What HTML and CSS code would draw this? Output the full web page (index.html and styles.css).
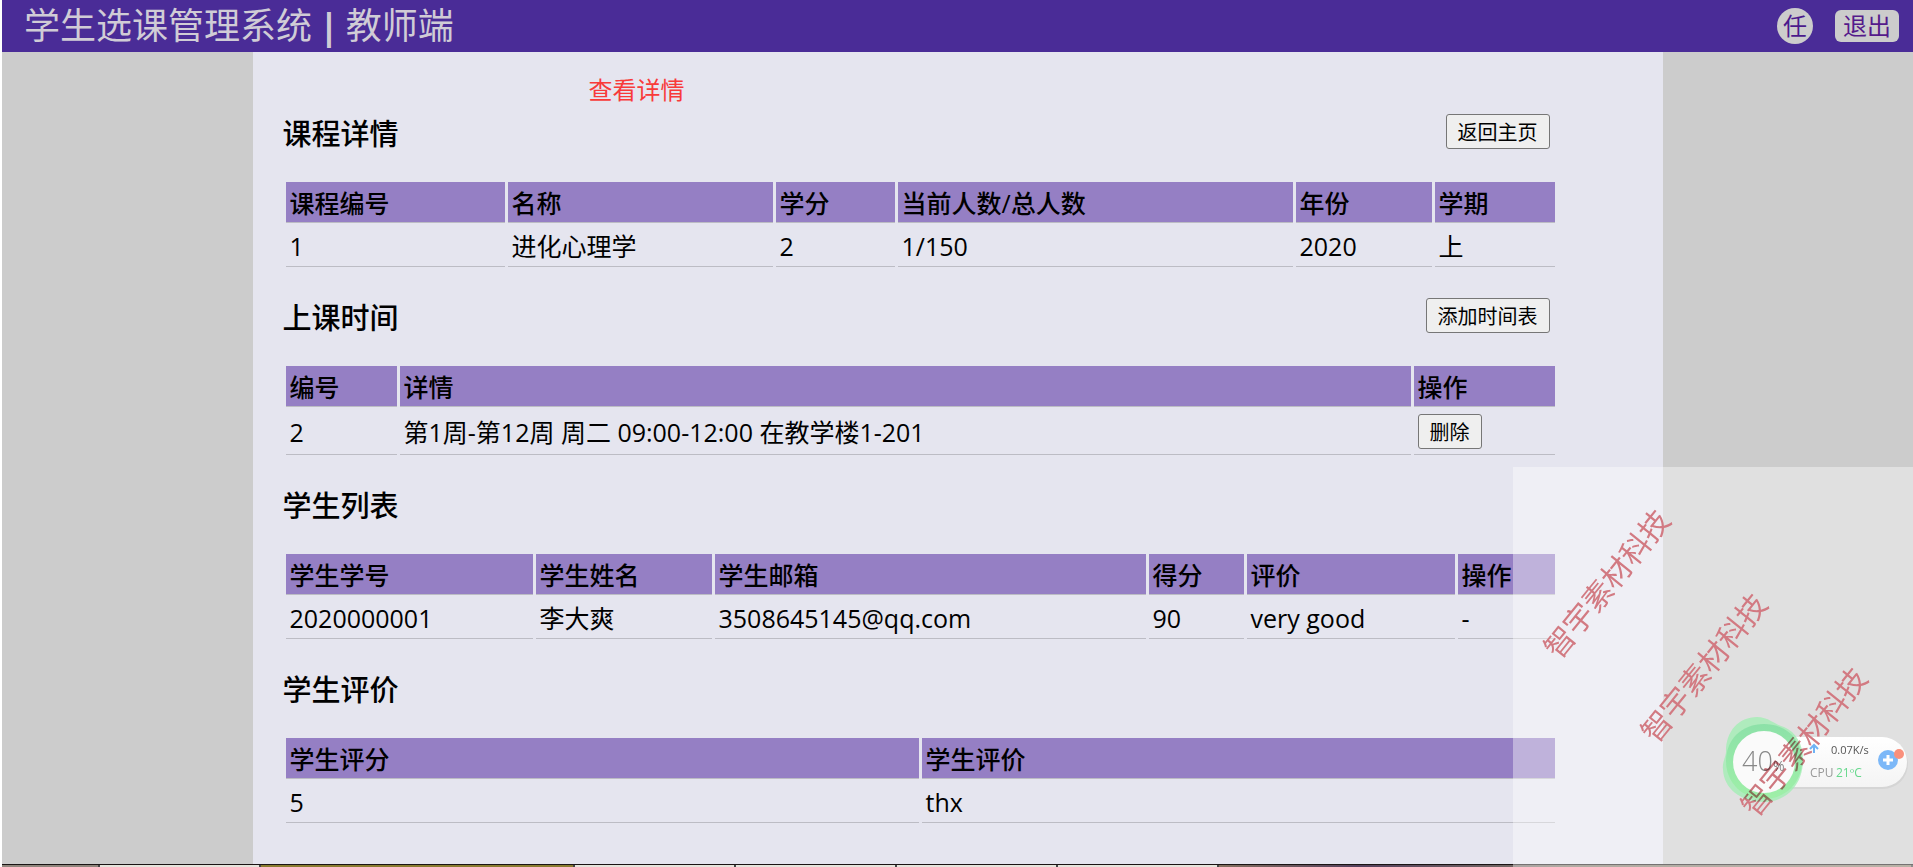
FILE: index.html
```
<!DOCTYPE html>
<html lang="zh-CN">
<head>
    <meta charset="UTF-8">
    <meta name="viewport" content="width=device-width, initial-scale=1.0">
    <title>学生选课管理系统 | 教师端</title>
    <link rel="stylesheet" href="styles.css">
</head>
<body>
    <header class="top-bar">
        <h1 class="site-title">学生选课管理系统<span class="bar">|</span>教师端</h1>
        <nav class="user-nav">
            <span class="avatar">任</span>
            <a class="logout" href="#">退出</a>
        </nav>
    </header>

    <main class="content">
        <p class="message">查看详情</p>

        <section>
            <div class="section-head">
                <h2>课程详情</h2>
                <button type="button">返回主页</button>
            </div>
            <table>
                <colgroup>
                    <col class="w-219"><col class="w-265"><col class="w-119"><col><col class="w-136"><col class="w-120">
                </colgroup>
                <thead>
                    <tr><th>课程编号</th><th>名称</th><th>学分</th><th>当前人数/总人数</th><th>年份</th><th>学期</th></tr>
                </thead>
                <tbody>
                    <tr><td>1</td><td>进化心理学</td><td>2</td><td>1/150</td><td>2020</td><td>上</td></tr>
                </tbody>
            </table>
        </section>

        <section>
            <div class="section-head">
                <h2>上课时间</h2>
                <button type="button">添加时间表</button>
            </div>
            <table>
                <colgroup>
                    <col class="w-111"><col><col class="w-141">
                </colgroup>
                <thead>
                    <tr><th>编号</th><th>详情</th><th>操作</th></tr>
                </thead>
                <tbody>
                    <tr><td>2</td><td>第1周-第12周 周二 09:00-12:00 在教学楼1-201</td><td><button type="button">删除</button></td></tr>
                </tbody>
            </table>
        </section>

        <section>
            <div class="section-head">
                <h2>学生列表</h2>
            </div>
            <table>
                <colgroup>
                    <col class="w-247"><col class="w-176"><col><col class="w-95"><col class="w-208"><col class="w-97">
                </colgroup>
                <thead>
                    <tr><th>学生学号</th><th>学生姓名</th><th>学生邮箱</th><th>得分</th><th>评价</th><th>操作</th></tr>
                </thead>
                <tbody>
                    <tr><td>2020000001</td><td>李大爽</td><td>3508645145@qq.com</td><td>90</td><td>very good</td><td>-</td></tr>
                </tbody>
            </table>
        </section>

        <section>
            <div class="section-head">
                <h2>学生评价</h2>
            </div>
            <table>
                <thead>
                    <tr><th>学生评分</th><th>学生评价</th></tr>
                </thead>
                <tbody>
                    <tr><td>5</td><td>thx</td></tr>
                </tbody>
            </table>
        </section>
    </main>

    <footer class="taskbar">
        <span class="task task-start"></span>
        <span class="task task-light"></span>
        <span class="task task-olive"></span>
        <span class="task task-light"></span>
        <span class="task task-light"></span>
        <span class="task task-light"></span>
        <span class="task task-light"></span>
        <span class="task task-rest"></span>
    </footer>

    <div class="overlay">
        <!-- system monitor ball -->
        <svg class="monitor" width="200" height="100" viewBox="0 0 200 100">
            <defs>
                <linearGradient id="ring" x1="0" y1="0" x2="0" y2="1">
                    <stop offset="0" stop-color="#86dfa4"/>
                    <stop offset="1" stop-color="#9cf0a4"/>
                </linearGradient>
                <linearGradient id="pill" x1="0" y1="0" x2="0" y2="1">
                    <stop offset="0" stop-color="#ffffff"/>
                    <stop offset="1" stop-color="#f4f4f4"/>
                </linearGradient>
            </defs>
            <rect x="51" y="29" width="144" height="50" rx="25" fill="#000" opacity=".05"/>
            <rect x="50" y="27" width="144" height="50" rx="25" fill="url(#pill)"/>
            <path d="M44 7c11 0 17 7 27 10 12 5 19 17 19 33 0 24-16 42-39 42-24 0-40-14-41-32-1-8 3-13 3-19C13 21 26 7 44 7z" fill="#a3edb4" opacity=".8"/>
            <path d="M51 14c22 0 38 15 38 37S72 89 51 89 13 73 13 51s16-37 38-37z" fill="url(#ring)" opacity=".85"/>
            <circle cx="51" cy="52" r="31" fill="#fafafa"/>
            <text class="percent" x="29" y="61">40</text>
            <text class="percent-sign" x="60" y="61">%</text>
            <path d="M101 43v-7M97 39l4-4 4 4" fill="none" stroke="#6fb3f5" stroke-width="2"/>
            <text class="speed" x="118" y="44">0.07K/s</text>
            <text class="cpu" x="97" y="67">CPU</text>
            <text class="temp" x="123" y="67">21ºC</text>
            <circle cx="175" cy="50" r="10" fill="#7cb8f8"/>
            <path d="M170 50h10M175 45v10" stroke="#fff" stroke-width="3"/>
            <circle cx="186" cy="44" r="5" fill="#fa907c"/>
        </svg>
        <span class="watermark mark-1">智宇素材科技</span>
        <span class="watermark mark-2">智宇素材科技</span>
        <span class="watermark mark-3">智宇素材科技</span>
    </div>
</body>
</html>
```

FILE: styles.css
```
* {
    box-sizing: border-box;
}

html {
    background-color: #ccc;
}

body {
    margin: 0;
    min-height: 100vh;
    display: flex;
    flex-direction: column;
    border-left: 2px solid #fff;
    font-family: "Open Sans", "Noto Sans CJK SC", sans-serif;
    font-size: 24px;
    line-height: 32px;
    color: #000;
}

.top-bar {
    display: flex;
    justify-content: space-between;
    align-items: center;
    height: 52px;
    padding: 0 14px 0 22px;
    background-color: #4a2c97;
}

.site-title {
    margin: 0;
    font-size: 36px;
    font-weight: 400;
    line-height: 52px;
    color: #d0ccd6;
}

.bar {
    margin: 0 7px;
    font-weight: 700;
}

.user-nav {
    display: flex;
    align-items: center;
    gap: 22px;
}

.avatar {
    width: 36px;
    height: 36px;
    border-radius: 50%;
    background-color: #ccc;
    color: #4b1a8c;
    line-height: 36px;
    text-align: center;
}

.logout {
    padding: 0 8px;
    border-radius: 6px;
    background-color: #ccc;
    color: #551a8b;
    text-decoration: none;
}

.content {
    flex: 1;
    width: 100%;
    max-width: 1410px;
    margin: 0 auto;
    padding: 22px 105px 37px 30px;
    background-color: #e5e5ef;
}

.message {
    margin: 0 0 8px;
    padding-left: 24%;
    color: #f83a3a;
}

section + section {
    margin-top: 28px;
}

.section-head {
    display: flex;
    justify-content: space-between;
    align-items: flex-start;
    padding-right: 8px;
    margin-bottom: 25px;
}

h2 {
    margin: 0;
    font-size: 29px;
    font-weight: 500;
    line-height: 40px;
}

button {
    display: block;
    height: 35px;
    padding: 2px 11px 0;
    border: 1px solid #767676;
    border-radius: 3px;
    background-color: #efefef;
    font-family: inherit;
    font-size: 20px;
    line-height: 30px;
    color: #000;
}

table {
    width: 100%;
    table-layout: fixed;
    border-collapse: separate;
    border-spacing: 3px;
}

th,
td {
    padding: 4px;
    border-bottom: 1px solid #bcbcc4;
    font-size: 25px;
    text-align: left;
}

th {
    padding: 5px 4px 3px;
    background-color: #957fc4;
    font-weight: 500;
}

td button {
    margin-bottom: 1px;
}

.w-95 { width: 95px; }
.w-97 { width: 97px; }
.w-111 { width: 111px; }
.w-119 { width: 119px; }
.w-120 { width: 120px; }
.w-136 { width: 136px; }
.w-141 { width: 141px; }
.w-176 { width: 176px; }
.w-208 { width: 208px; }
.w-219 { width: 219px; }
.w-247 { width: 247px; }
.w-265 { width: 265px; }

/* visible edge of the taskbar */
.taskbar {
    display: flex;
    height: 3px;
    margin-left: -2px;
    border-top: 1px solid #1a1414;
}

.task {
    width: 161px;
    border-right: 2px solid #444;
}

.task-start {
    width: 100px;
    background-color: #8f857c;
}

.task-light {
    background-color: #e6e4dc;
}

.task-olive {
    width: 314px;
    background-color: #8a7c30;
}

.task-rest {
    flex: 1;
    background: linear-gradient(90deg, #84705f, #54405c 20%, #7d7466 50%, #8a7f6c);
}

.overlay {
    position: fixed;
    right: 0;
    bottom: 0;
    width: 400px;
    height: 400px;
    background-color: rgba(255, 255, 255, 0.4);
    overflow: hidden;
    pointer-events: none;
}

.watermark {
    position: absolute;
    width: 200px;
    font-size: 30px;
    font-weight: 400;
    line-height: 40px;
    text-align: center;
    color: #d27a82;
    mix-blend-mode: multiply;
    transform: rotate(-51deg);
}

.mark-1 {
    left: -6px;
    top: 97px;
}

.mark-2 {
    left: 91px;
    top: 181px;
}

.mark-3 {
    left: 191px;
    top: 255px;
}

.monitor {
    position: absolute;
    right: 0;
    bottom: 57px;
}

.percent {
    font-size: 27px;
    font-weight: 300;
    fill: #888;
}

.percent-sign {
    font-size: 14px;
    fill: #888;
}

.speed {
    font-size: 11px;
    fill: #555;
}

.cpu {
    font-size: 12px;
    fill: #999;
}

.temp {
    font-size: 12px;
    fill: #66d88c;
}
```
